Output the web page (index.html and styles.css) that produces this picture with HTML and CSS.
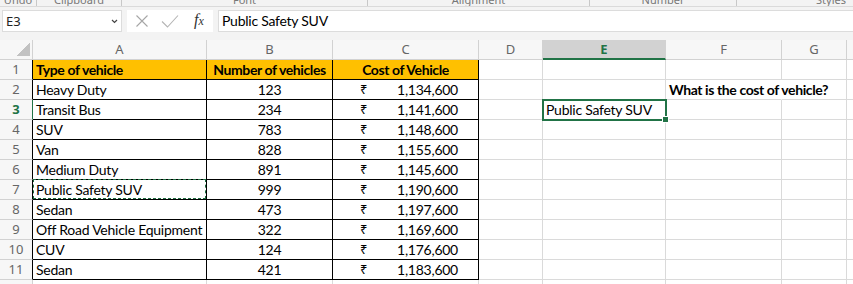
FILE: index.html
```html
<!DOCTYPE html>
<html lang="en">

<head>
  <meta charset="UTF-8" />
  <meta name="viewport" content="width=device-width, initial-scale=1.0" />
  <title>Vehicle costs</title>
  <link rel="stylesheet" href="styles.css">
</head>

<body>
  <!-- bottom edge of the ribbon, group labels cut off -->
  <div class="ribbon">
    <div class="group g1"><span>Undo</span></div>
    <div class="group g2"><span>Clipboard</span></div>
    <div class="group g3"><span>Font</span></div>
    <div class="group g4"><span>Alignment</span></div>
    <div class="group g5"><span>Number</span></div>
    <div class="group g6"><span>Styles</span></div>
  </div>

  <div class="formula-bar">
    <div class="name-box">
      <span>E3</span>
      <svg width="7" height="5" viewBox="0 0 7 5"><path d="M1 1 L3.5 3.5 L6 1" fill="none" stroke="#444" stroke-width="1.2" /></svg>
    </div>
    <div class="fx-buttons">
      <svg width="86" height="22" viewBox="0 0 86 22">
        <path d="M9.5 5.5 L20.5 16.5 M20.5 5.5 L9.5 16.5" stroke="#a6a6a6" stroke-width="1.1" fill="none" />
        <path d="M35 11.5 L40.5 17 L51 5.5" stroke="#b4b4b4" stroke-width="1.1" fill="none" />
      </svg>
      <span class="fx">f<small>x</small></span>
    </div>
    <div class="formula-input">Public Safety SUV</div>
  </div>

  <div class="sheet">
    <div class="row head">
      <div class="cell corner"></div>
      <div class="cell ch">A</div>
      <div class="cell ch">B</div>
      <div class="cell ch">C</div>
      <div class="cell ch">D</div>
      <div class="cell ch sel">E</div>
      <div class="cell ch">F</div>
      <div class="cell ch">G</div>
      <div class="cell ch last"></div>
    </div>

    <div class="row tbl title">
      <div class="cell rh">1</div>
      <div class="cell a">Type of vehicle</div>
      <div class="cell b">Number of vehicles</div>
      <div class="cell c center">Cost of Vehicle</div>
      <div class="cell"></div><div class="cell"></div><div class="cell"></div><div class="cell"></div><div class="cell"></div>
    </div>

    <div class="row tbl">
      <div class="cell rh">2</div>
      <div class="cell a">Heavy Duty</div>
      <div class="cell b">123</div>
      <div class="cell c"><span class="rs">₹</span><span>1,134,600</span></div>
      <div class="cell"></div><div class="cell"></div>
      <div class="cell spill">What is the cost of vehicle?</div>
      <div class="cell"></div><div class="cell"></div>
    </div>

    <div class="row tbl current">
      <div class="cell rh">3</div>
      <div class="cell a">Transit Bus</div>
      <div class="cell b">234</div>
      <div class="cell c"><span class="rs">₹</span><span>1,141,600</span></div>
      <div class="cell"></div>
      <div class="cell active">Public Safety SUV</div>
      <div class="cell"></div><div class="cell"></div><div class="cell"></div>
    </div>

    <div class="row tbl">
      <div class="cell rh">4</div>
      <div class="cell a">SUV</div>
      <div class="cell b">783</div>
      <div class="cell c"><span class="rs">₹</span><span>1,148,600</span></div>
      <div class="cell"></div><div class="cell"></div><div class="cell"></div><div class="cell"></div><div class="cell"></div>
    </div>

    <div class="row tbl">
      <div class="cell rh">5</div>
      <div class="cell a">Van</div>
      <div class="cell b">828</div>
      <div class="cell c"><span class="rs">₹</span><span>1,155,600</span></div>
      <div class="cell"></div><div class="cell"></div><div class="cell"></div><div class="cell"></div><div class="cell"></div>
    </div>

    <div class="row tbl">
      <div class="cell rh">6</div>
      <div class="cell a">Medium Duty</div>
      <div class="cell b">891</div>
      <div class="cell c"><span class="rs">₹</span><span>1,145,600</span></div>
      <div class="cell"></div><div class="cell"></div><div class="cell"></div><div class="cell"></div><div class="cell"></div>
    </div>

    <div class="row tbl">
      <div class="cell rh">7</div>
      <div class="cell a copied">Public Safety SUV</div>
      <div class="cell b">999</div>
      <div class="cell c"><span class="rs">₹</span><span>1,190,600</span></div>
      <div class="cell"></div><div class="cell"></div><div class="cell"></div><div class="cell"></div><div class="cell"></div>
    </div>

    <div class="row tbl">
      <div class="cell rh">8</div>
      <div class="cell a">Sedan</div>
      <div class="cell b">473</div>
      <div class="cell c"><span class="rs">₹</span><span>1,197,600</span></div>
      <div class="cell"></div><div class="cell"></div><div class="cell"></div><div class="cell"></div><div class="cell"></div>
    </div>

    <div class="row tbl">
      <div class="cell rh">9</div>
      <div class="cell a">Off Road Vehicle Equipment</div>
      <div class="cell b">322</div>
      <div class="cell c"><span class="rs">₹</span><span>1,169,600</span></div>
      <div class="cell"></div><div class="cell"></div><div class="cell"></div><div class="cell"></div><div class="cell"></div>
    </div>

    <div class="row tbl">
      <div class="cell rh">10</div>
      <div class="cell a">CUV</div>
      <div class="cell b">124</div>
      <div class="cell c"><span class="rs">₹</span><span>1,176,600</span></div>
      <div class="cell"></div><div class="cell"></div><div class="cell"></div><div class="cell"></div><div class="cell"></div>
    </div>

    <div class="row tbl">
      <div class="cell rh">11</div>
      <div class="cell a">Sedan</div>
      <div class="cell b">421</div>
      <div class="cell c"><span class="rs">₹</span><span>1,183,600</span></div>
      <div class="cell"></div><div class="cell"></div><div class="cell"></div><div class="cell"></div><div class="cell"></div>
    </div>

    <div class="row">
      <div class="cell rh"></div>
      <div class="cell"></div><div class="cell"></div><div class="cell"></div><div class="cell"></div>
      <div class="cell"></div><div class="cell"></div><div class="cell"></div><div class="cell"></div>
    </div>
  </div>
</body>

</html>
```

FILE: styles.css
```css
body {
  margin: 0;
  width: 853px;
  height: 284px;
  overflow: hidden;
  background: #fff;
  font-family: Lato, "Liberation Sans", sans-serif;
}

/* Ribbon strip (only the bottom of the group labels shows) */
.ribbon {
  display: flex;
  height: 6px;
  overflow: hidden;
  background: #f3f3f3;
  border-bottom: 1px solid #dadada;
}

.group {
  flex: none;
  box-sizing: border-box;
  border-right: 1px solid #c8c8c8;
  text-align: center;
  font: 11px "Noto Sans", sans-serif;
  line-height: 11px;
  color: #777;
}

.group span {
  display: block;
  margin-top: -6px;
}

.g1 { width: 37px; }
.g2 { width: 85px; }
.g3 { width: 246px; }
.g4 { width: 222px; }
.g5 { width: 147px; }
.g6 { width: 188px; border-right: none; }

/* Formula bar */
.formula-bar {
  display: flex;
  align-items: flex-start;
  gap: 5px;
  height: 33px;
  box-sizing: border-box;
  padding: 3px 0 0 2px;
  background: #f3f3f3;
}

.name-box {
  width: 120px;
  height: 22px;
  box-sizing: border-box;
  border: 1px solid #dcdcdc;
  background: #fff;
  display: flex;
  align-items: center;
  justify-content: space-between;
  padding: 0 3px 0 3px;
  font: 13px "Noto Sans", sans-serif;
  color: #222;
}

.fx-buttons {
  width: 86px;
  height: 22px;
  background: #fff;
  position: relative;
}

.fx-buttons svg {
  display: block;
}

.fx {
  position: absolute;
  left: 67px;
  top: 1px;
  font: italic 16px "Liberation Serif", serif;
  color: #333;
}

.fx small {
  font-size: 12px;
}

.formula-input {
  flex: 1;
  height: 22px;
  box-sizing: border-box;
  border: 1px solid #dcdcdc;
  border-right: none;
  background: #fff;
  padding-left: 3px;
  font-size: 14px;
  letter-spacing: -0.25px;
  line-height: 20px;
  color: #000;
}

/* Sheet grid */
.sheet {
  display: grid;
  grid-template-columns: 33px 174px 126px 146px 64px 123px 116px 65px 1fr;
  grid-auto-rows: 20px;
}

.row {
  display: contents;
}

.cell {
  box-sizing: border-box;
  border-right: 1px solid #dadada;
  border-bottom: 1px solid #dadada;
  padding: 0 3px;
  font-size: 14px;
  letter-spacing: -0.25px;
  line-height: 19px;
  white-space: nowrap;
  color: #000;
}

.ch,
.rh,
.corner {
  background: #f7f7f7;
  border-color: #d2d2d2;
  text-align: center;
  font: 13px "Noto Sans", sans-serif;
  letter-spacing: 0;
  line-height: 19px;
  color: #666;
}

.corner {
  background: linear-gradient(135deg, transparent 50%, #c2c2c2 50%) no-repeat right 2px bottom 3px / 14px 14px, #f7f7f7;
}

.ch.sel {
  background: #d2d2d2;
  border-bottom: 2px solid #217346;
  color: #217346;
  font-weight: bold;
}

.ch.last {
  border-right: none;
}

/* Bordered data table A1:C11 */
.tbl .rh,
.tbl .a,
.tbl .b,
.tbl .c {
  border-right-color: #000;
}

.tbl .a,
.tbl .b,
.tbl .c {
  border-bottom-color: #000;
}

.current .rh {
  border-right-color: #217346;
  color: #217346;
  font-weight: bold;
}

.title .a,
.title .b,
.title .c {
  background: #ffc000;
  font-weight: bold;
  letter-spacing: -0.4px;
}

.b,
.center {
  text-align: center;
}

.c {
  display: flex;
  justify-content: space-between;
  padding: 0 20px 0 27px;
}

.c.center {
  justify-content: center;
  padding: 0;
}

.rs {
  font-family: "Noto Sans", "DejaVu Sans", sans-serif;
  font-size: 13px;
}

.spill {
  font-weight: bold;
  letter-spacing: -0.4px;
  border-right-color: transparent;
}

/* Active cell and copy marquee */
.active {
  position: relative;
  z-index: 1;
  outline: 2px solid #217346;
  outline-offset: -1px;
}

.active::after {
  content: "";
  position: absolute;
  right: -4px;
  bottom: -4px;
  width: 5px;
  height: 5px;
  background: #217346;
  border: 1px solid #fff;
}

.copied {
  position: relative;
}

.copied::before {
  content: "";
  position: absolute;
  top: -1px;
  left: 0;
  right: 0;
  bottom: 0;
  border: 1px dashed #1f6e42;
}
```
